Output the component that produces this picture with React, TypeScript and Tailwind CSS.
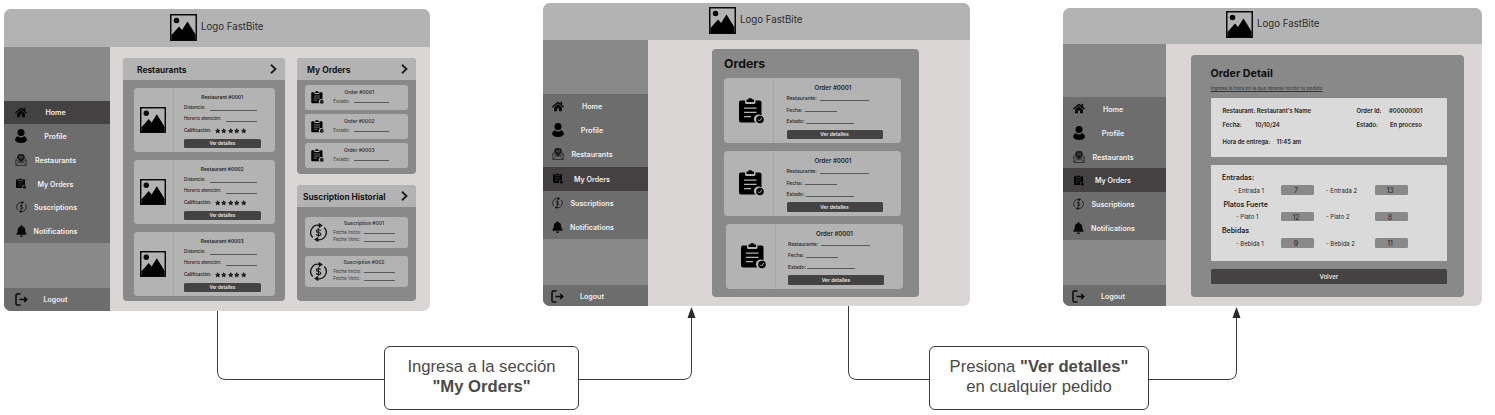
import type { ReactNode } from "react";
import { FaBell, FaHome, FaStar } from "react-icons/fa";

function Picture({ className }: { className: string }) {
  return (
    <svg viewBox="0 0 54 54" className={className}>
      <rect x="1.5" y="1.5" width="51" height="51" fill="none" stroke="#0a0a0a" strokeWidth="3" />
      <circle cx="13" cy="13" r="5.5" />
      <path d="M3 42 L11 33 L18 25 L24 32 L35 15 L45 31 L51 41 V52 H3Z" />
    </svg>
  );
}

function Profile() {
  return (
    <svg viewBox="0 0 24 28" className="h-[14px] w-[12px]">
      <circle cx="12" cy="7" r="7" />
      <path d="M5 14 Q12 20 19 14 Q24 17 24 23 Q20 28 12 28 Q4 28 0 23 Q0 17 5 14Z" />
    </svg>
  );
}

function Venue() {
  return (
    <svg viewBox="0 0 24 24" className="h-[12px] w-[12px]" fill="none" stroke="#222" strokeWidth="1.500">
      <path d="M6 8 L1.5 11 V23 H22.5 V11 L18 8" />
      <path d="M2 12 L12 18 L22 12 M2 22 L9 16 M22 22 L15 16" />
      <path d="M12 16 Q5 11 5 6.500 A7 6.500 0 0 1 19 6.500 Q19 11 12 16Z" fill="#161616" />
      <path d="M10 3.500 V9 M14 3.500 V9" stroke="#8a8a8a" strokeWidth="1.300" />
    </svg>
  );
}

function Clipboard({ className, line = "#b3b3b3" }: { className: string; line?: string }) {
  return (
    <svg viewBox="0 0 50 52" className={className}>
      <path d="M4 5 H12 V9 Q12 12 15 12 H30 Q33 12 33 9 V5 H41 Q45 5 45 9 V35 A9 9 0 0 0 33 49 H4 Q0 49 0 45 V9 Q0 5 4 5Z" />
      <path d="M15 3 H18 Q19 0 22.500 0 Q26 0 27 3 H30 V8 H15Z" />
      <path d="M10 20 H35 M10 28.500 H35 M10 37 H24" stroke={line} strokeWidth="2.500" />
      <circle cx="42" cy="43" r="7.500" />
      <path d="M38 43 L41 46 L46 40" fill="none" stroke={line} strokeWidth="2" />
    </svg>
  );
}

function Renewal({ className }: { className: string }) {
  return (
    <svg viewBox="0 0 34 38" className={className} fill="none" stroke="#161616" strokeWidth="2.600">
      <path d="M5.500 29 A14.500 14.500 0 0 1 19 4.800" />
      <path d="M28.500 9 A14.500 14.500 0 0 1 15 33.200" />
      <path d="M18 0.500 L25 5 L18 9.500Z M16 28.500 L9 33 L16 37.500Z" fill="#111" strokeWidth="1" />
      <path d="M21.200 15.500 Q20 13 17 13 Q12.800 13 12.800 16 Q12.800 18.500 17 19 Q21.500 19.500 21.500 22.300 Q21.500 25 17 25 Q13.500 25 12.300 22.800 M17 10.500 V27.500" strokeWidth="2.300" />
    </svg>
  );
}

function Exit() {
  return (
    <svg viewBox="0 0 26 26" className="h-[13px] w-[13px]" fill="none" stroke="#080808" strokeWidth="3">
      <path d="M11 2 H4.500 Q2 2 2 4.500 V21.500 Q2 24 4.500 24 H11" />
      <path d="M9 13 H23 M18.500 8 L23.500 13 L18.500 18" />
    </svg>
  );
}

function Chevron() {
  return (
    <svg viewBox="0 0 14 20" className="h-[10px] w-[7px]" fill="none" stroke="#1c1c1c" strokeWidth="3.600">
      <path d="M2 1.500 L11 10 L2 18.500" />
    </svg>
  );
}

const menu: { name: string; icon: ReactNode }[] = [
  { name: "Home", icon: <FaHome className="h-[13px] w-[12px]" /> },
  { name: "Profile", icon: <Profile /> },
  { name: "Restaurants", icon: <Venue /> },
  { name: "My Orders", icon: <Clipboard className="h-[11px] w-[10px]" line="#4c4c4c" /> },
  { name: "Suscriptions", icon: <Renewal className="h-[12px] w-[11px]" /> },
  { name: "Notifications", icon: <FaBell className="h-[12px] w-[11px]" /> },
];

function MenuItem({ name, icon, className }: { name: string; icon: ReactNode; className: string }) {
  return (
    <div className={`flex items-center ${className}`}>
      <span className="flex w-[14px] shrink-0 justify-center text-[#080808]">{icon}</span>
      <span className="flex w-[55px] shrink-0 justify-center pt-[1px] text-[7.1px] font-semibold whitespace-nowrap text-[#f0f0f0]">
        {name}
      </span>
    </div>
  );
}

type ScreenProps = {
  place: string;
  header: string;
  side: string;
  top: string;
  list: string;
  pad: string;
  exit: string;
  active?: string;
  children: ReactNode;
};

function Screen({ place, header, side, top, list, pad, exit, active, children }: ScreenProps) {
  return (
    <section className={`absolute flex flex-col overflow-hidden rounded-[7px] bg-[#d9d6d5] ${place}`}>
      <header className={`flex shrink-0 items-center gap-[4px] bg-[#b3b3b3] ${header}`}>
        <Picture className="h-[27px] w-[27px]" />
        <span className="text-[9.700px] text-[#2c2c2c]">Logo FastBite</span>
      </header>
      <div className="flex min-h-0 flex-1">
        <nav className={`flex shrink-0 flex-col bg-[#898989] ${side}`}>
          <div className={top} />
          <div className={`flex flex-col bg-[#6d6d6d] ${list}`}>
            {menu.map((m) => (
              <MenuItem key={m.name} {...m} className={`flex-1 ${pad} ${m.name === active ? "bg-[#444142]" : ""}`} />
            ))}
          </div>
          <div className={`mt-auto flex bg-[#6d6d6d] ${exit}`}>
            <MenuItem name="Logout" icon={<Exit />} className={pad} />
          </div>
        </nav>
        {children}
      </div>
    </section>
  );
}

function Field({ label, row, line }: { label: string; row: string; line: string }) {
  return (
    <div className={`flex items-center justify-between whitespace-nowrap ${row}`}>
      <span>{label}</span>
      <span className={`mt-[3px] h-px shrink-0 bg-[#5a5a5a] ${line}`} />
    </div>
  );
}

function DetailButton({ className }: { className: string }) {
  return (
    <div className={`flex items-center justify-center rounded-[1.5px] bg-[#444242] pt-[0.500px] font-semibold text-[#e6e6e6] ${className}`}>
      Ver detalles
    </div>
  );
}

function RestaurantCard({ id }: { id: string }) {
  return (
    <article className="flex h-[64px] rounded-[4px] bg-[#b3b3b3]">
      <div className="flex w-[39.500px] items-center justify-center border-r border-[#a4a4a4] pr-[1px]">
        <Picture className="h-[26px] w-[26px]" />
      </div>
      <div className="flex w-[87px] flex-col pt-[5px] pl-[10.500px] text-[4.500px] font-medium text-[#242424]">
        <div className="mb-[2px] flex h-[8px] items-center justify-center text-[4.900px] font-semibold">Restaurant #{id}</div>
        <Field label="Distancia:" row="h-[11px] w-[73px]" line="w-[47px]" />
        <Field label="Horario atención:" row="h-[11px] w-[73px]" line="w-[31px]" />
        <div className="flex h-[12px] items-center gap-[2px]">
          <span className="w-[28.500px] font-semibold whitespace-nowrap">Calificación:</span>
          <span className="flex gap-[1px]">
            {[1, 2, 3, 4, 5].map((n) => (
              <FaStar key={n} className="h-[5.500px] w-[5.500px]" />
            ))}
          </span>
        </div>
        <DetailButton className="mt-[2px] h-[9px] w-[76.500px] text-[4.500px]" />
      </div>
    </article>
  );
}

function Heading({ title, className }: { title: string; className: string }) {
  return (
    <div className={`flex h-[22px] shrink-0 items-center justify-between rounded-t-[4px] bg-[#b3b3b3] pr-[8px] font-bold whitespace-nowrap text-[#161616] ${className}`}>
      <span className="pt-[2px]">{title}</span>
      <Chevron />
    </div>
  );
}

function HomeScreen() {
  return (
    <Screen
      place="top-[9px] left-[4px] h-[302px] w-[426px]"
      header="h-[38px] pb-[2px] pl-[166px]"
      side="w-[106px]"
      top="h-[53.500px]"
      list="h-[142.500px]"
      pad="pl-[10px]"
      exit="h-[23px]"
      active="Home"
    >
      <main className="flex gap-[12px] pt-[11px] pl-[13px]">
        <section className="flex h-[243px] w-[162px] flex-col rounded-[4px] bg-[#898989]">
          <Heading title="Restaurants" className="pl-[14px] text-[8.400px]" />
          <div className="flex flex-col gap-[8px] pt-[8px] pr-[10px] pl-[11px]">
            {["0001", "0002", "0003"].map((id) => (
              <RestaurantCard key={id} id={id} />
            ))}
          </div>
        </section>
        <div className="flex w-[119px] flex-col gap-[11px]">
          <section className="flex h-[116px] flex-col rounded-[4px] bg-[#898989]">
            <Heading title="My Orders" className="pl-[10px] text-[8.500px]" />
            <div className="flex flex-col gap-[4.500px] px-[7.800px] pt-[5px]">
              {["0001", "0002", "0003"].map((id) => (
                <article key={id} className="flex h-[24.500px] items-center rounded-[3px] bg-[#b3b3b3] pl-[6.500px]">
                  <Clipboard className="h-[13px] w-[13px]" />
                  <div className="ml-[9px] flex w-[56px] flex-col text-[4.700px] text-[#333]">
                    <div className="flex h-[8px] items-center justify-center pr-[4px] text-[4.900px] font-semibold">Order #{id}</div>
                    <Field label="Estado:" row="h-[9px]" line="w-[35px]" />
                  </div>
                </article>
              ))}
            </div>
          </section>
          <section className="flex h-[116px] flex-col rounded-[4px] bg-[#898989]">
            <Heading title="Suscription Historial" className="pl-[6px] text-[8.300px]" />
            <div className="flex flex-col gap-[8px] px-[7.800px] pt-[10px]">
              {["001", "002"].map((id) => (
                <article key={id} className="flex h-[31px] items-center rounded-[3px] bg-[#b3b3b3] pl-[5.500px]">
                  <Renewal className="h-[19px] w-[17px]" />
                  <div className="ml-[6px] flex h-full w-[61.500px] flex-col pt-[2px] text-[4.700px] text-[#333]">
                    <div className="mb-[1.500px] flex h-[8px] items-center justify-center text-[4.900px] font-semibold">Suscription #{id}</div>
                    <Field label="Fecha Inicio:" row="h-[7.500px]" line="w-[31px]" />
                    <Field label="Fecha Venc:" row="h-[7.500px]" line="w-[31px]" />
                  </div>
                </article>
              ))}
            </div>
          </section>
        </div>
      </main>
    </Screen>
  );
}

function OrderCard({ className }: { className: string }) {
  return (
    <article className={`flex h-[65px] w-[177px] shrink-0 rounded-[4px] bg-[#b3b3b3] ${className}`}>
      <div className="flex w-[50px] items-center justify-center border-r border-[#a4a4a4] pl-[6px]">
        <Clipboard className="h-[26px] w-[25px]" />
      </div>
      <div className="flex flex-col pt-[5px] pl-[12.500px] text-[5px] font-medium text-[#242424]">
        <div className="flex h-[10px] w-[93px] items-center justify-center text-[6.100px] font-semibold">Order #0001</div>
        <Field label="Restaurante:" row="h-[11.500px] w-[82px]" line="w-[49px]" />
        <Field label="Fecha:" row="h-[11.500px] w-[50px]" line="w-[32px]" />
        <Field label="Estado:" row="h-[11.500px] w-[67px]" line="w-[48px]" />
        <DetailButton className="mt-[2px] h-[9.500px] w-[96px] text-[5px]" />
      </div>
    </article>
  );
}

function OrdersScreen() {
  return (
    <Screen
      place="top-[3px] left-[543px] h-[303px] w-[427px]"
      header="h-[37px] pb-[3px] pl-[166px]"
      side="w-[104.500px]"
      top="h-[54px]"
      list="h-[145px]"
      pad="pl-[7.500px]"
      exit="h-[21px] pt-[2px]"
      active="My Orders"
    >
      <main className="pt-[9px] pl-[64.500px]">
        <section className="flex h-[248px] w-[206.500px] flex-col rounded-[4px] bg-[#898989] pl-[12px]">
          <h2 className="flex h-[29px] shrink-0 items-center pt-[2px] text-[12.300px] font-bold text-[#111]">Orders</h2>
          <div className="flex flex-col gap-[7.800px]">
            <OrderCard className="" />
            <OrderCard className="" />
            <OrderCard className="ml-[1.500px]" />
          </div>
        </section>
      </main>
    </Screen>
  );
}

const dishes = [
  { group: "Entradas:", shift: "", pad: "pl-[12px]", items: [["- Entrada 1", "7"], ["- Entrada 2", "13"]] },
  { group: "Platos Fuerte", shift: "pl-[1.500px]", pad: "pl-[14px]", items: [["- Plato 1", "12"], ["- Plato 2", "8"]] },
  { group: "Bebidas", shift: "", pad: "pl-[14px]", items: [["- Bebida 1", "9"], ["- Bebida 2", "11"]] },
];

function Quantity({ value }: { value: string }) {
  return (
    <span className="flex h-[9.500px] w-[33px] shrink-0 items-center justify-center rounded-[1.500px] bg-[#898989] pt-[1px] pr-[3px] text-[7px] text-[#222]">
      {value}
    </span>
  );
}

function DetailScreen() {
  return (
    <Screen
      place="top-[8px] left-[1063px] h-[298px] w-[419px]"
      header="h-[36px] pb-[4px] pl-[163px]"
      side="w-[103px]"
      top="h-[53px]"
      list="h-[143px]"
      pad="pl-[8.500px]"
      exit="h-[21px] pt-[2px]"
      active="My Orders"
    >
      <main className="pt-[11px] pl-[24.500px]">
        <section className="flex h-[241.500px] w-[273px] flex-col rounded-[4px] bg-[#898989] pr-[16.500px] pl-[20px]">
          <h2 className="mt-[12px] flex h-[14px] items-center text-[10.700px] font-bold text-[#111]">Order Detail</h2>
          <p className="flex h-[14px] items-center text-[4.800px] text-[#333] underline decoration-[0.5px]">
            Ingresa la hora en la que deseas recibir tu pedido
          </p>
          <div className="mt-[3px] flex h-[58.500px] flex-col rounded-[1px] bg-[#dadada] pt-[6px] pl-[12px] text-[5.900px] font-semibold whitespace-nowrap text-[#222]">
            <div className="flex h-[14px] items-center">
              <span className="w-[134px]">Restaurant: Restaurant's Name</span>
              <span className="w-[32.500px]">Order Id:</span>
              <span>#00000001</span>
            </div>
            <div className="flex h-[14px] items-center">
              <span className="w-[32.500px]">Fecha:</span>
              <span className="w-[101.500px]">10/10/24</span>
              <span className="w-[33.500px]">Estado:</span>
              <span>En proceso</span>
            </div>
            <div className="mt-[2px] flex h-[16px] items-center">
              <span className="w-[54px]">Hora de entrega:</span>
              <span>11:45 am</span>
            </div>
          </div>
          <div className="mt-[8.500px] ml-[0.500px] flex h-[95.500px] flex-col rounded-[1px] bg-[#dadada] pt-[6px] pl-[11px] whitespace-nowrap text-[#222]">
            {dishes.map((d) => (
              <div key={d.group} className="flex h-[26.600px] flex-col">
                <div className={`flex h-[12.500px] items-center pt-[1px] text-[7px] font-semibold ${d.shift}`}>{d.group}</div>
                <div className="flex h-[13px] items-center text-[5.900px]">
                  <span className={`w-[59px] pt-[1px] ${d.pad}`}>{d.items[0][0]}</span>
                  <Quantity value={d.items[0][1]} />
                  <span className="w-[61px] pt-[1px] pl-[12px]">{d.items[1][0]}</span>
                  <Quantity value={d.items[1][1]} />
                </div>
              </div>
            ))}
          </div>
          <div className="mt-[8px] flex h-[15.500px] items-center justify-center rounded-[1.500px] bg-[#444242] pt-[1px] text-[6px] font-semibold text-[#e4e4e4]">
            Volver
          </div>
        </section>
      </main>
    </Screen>
  );
}

function Step({ place, children }: { place: string; children: ReactNode }) {
  return (
    <div className={`absolute flex items-center justify-center rounded-[6px] border border-[#3a3c42] bg-white pb-[3px] text-center font-['Liberation_Sans',Arial,sans-serif] text-[16.670px] leading-[20px] whitespace-nowrap text-[#4a4a4a] ${place}`}>
      <p>{children}</p>
    </div>
  );
}

export default function App() {
  return (
    <div className="relative h-[415px] w-[1495px] overflow-hidden bg-white font-['Inter',sans-serif] leading-none">
      <HomeScreen />
      <OrdersScreen />
      <DetailScreen />
      <svg viewBox="0 0 1495 415" className="absolute inset-0 h-[415px] w-[1495px]" fill="none" stroke="#3a3c42">
        <path d="M217.5 311 V371 Q217.5 379.500 226 379.500 H683 Q691.500 379.500 691.500 371 V317" />
        <path d="M848.500 306 V371 Q848.500 379.500 857 379.500 H1228 Q1236.500 379.500 1236.500 371 V317" />
        <path d="M691.500 307 L695.500 318 H687.500Z M1236.500 307 L1240.500 318 H1232.500Z" fill="#282a2e" stroke="none" />
      </svg>
      <Step place="top-[346px] left-[384px] h-[64px] w-[195px]">
        Ingresa a la sección
        <br />
        <b>"My Orders"</b>
      </Step>
      <Step place="top-[346px] left-[929px] h-[64px] w-[220px]">
        Presiona <b>"Ver detalles"</b>
        <br />
        en cualquier pedido
      </Step>
    </div>
  );
}
